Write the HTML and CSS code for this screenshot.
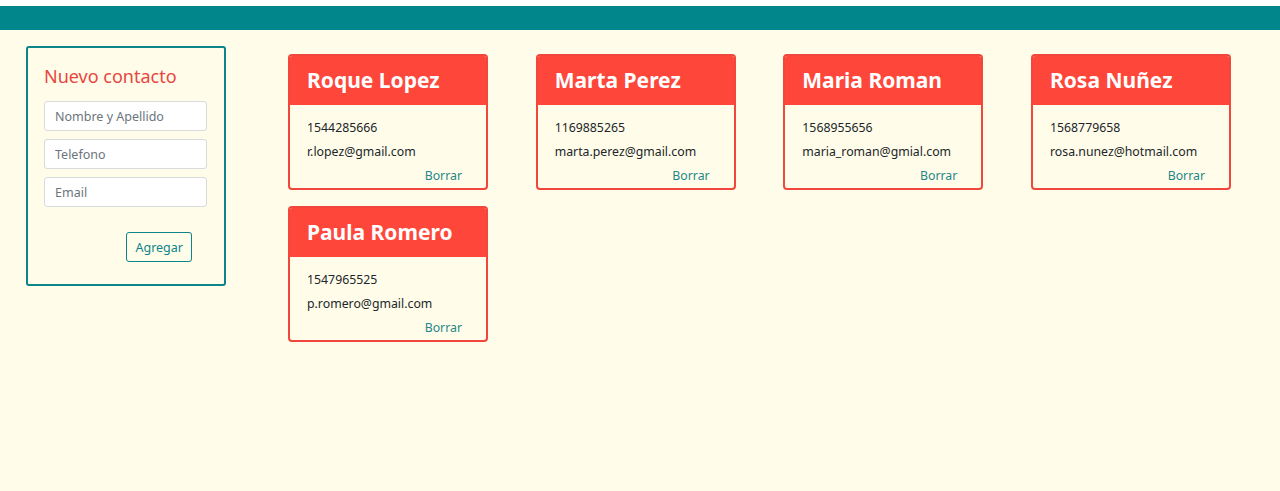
FILE: index.html
```html
<!DOCTYPE html>
<html lang="es">
<head>
<meta charset="utf-8">
<title>Contactos</title>
<link rel="stylesheet" href="styles.css">
</head>
<body>
<div class="topline"></div>
<header class="navbar"></header>
<main class="layout">
  <aside class="form-box">
    <h2 class="form-title">Nuevo contacto</h2>
    <input class="field" type="text" placeholder="Nombre y Apellido">
    <input class="field" type="text" placeholder="Telefono">
    <input class="field" type="text" placeholder="Email">
    <div class="actions"><button class="btn-add">Agregar</button></div>
  </aside>
  <section class="cards">
    <article class="card">
      <h3 class="card-head">Roque Lopez</h3>
      <div class="card-body">
        <p class="line">1544285666</p>
        <p class="line">r.lopez@gmail.com</p>
        <a class="del">Borrar</a>
      </div>
    </article>
    <article class="card">
      <h3 class="card-head">Marta Perez</h3>
      <div class="card-body">
        <p class="line">1169885265</p>
        <p class="line">marta.perez@gmail.com</p>
        <a class="del">Borrar</a>
      </div>
    </article>
    <article class="card">
      <h3 class="card-head">Maria Roman</h3>
      <div class="card-body">
        <p class="line">1568955656</p>
        <p class="line">maria_roman@gmial.com</p>
        <a class="del">Borrar</a>
      </div>
    </article>
    <article class="card">
      <h3 class="card-head">Rosa Nuñez</h3>
      <div class="card-body">
        <p class="line">1568779658</p>
        <p class="line">rosa.nunez@hotmail.com</p>
        <a class="del">Borrar</a>
      </div>
    </article>
    <article class="card">
      <h3 class="card-head">Paula Romero</h3>
      <div class="card-body">
        <p class="line">1547965525</p>
        <p class="line">p.romero@gmail.com</p>
        <a class="del">Borrar</a>
      </div>
    </article>
  </section>
</main>
</body>
</html>
```
FILE: styles.css
```css
html, body {
  margin: 0;
  padding: 0;
}
body {
  background: #fffde9;
  font-family: "Noto Sans", "Open Sans", sans-serif;
  color: #212529;
  min-height: 491px;
}
.topline {
  height: 6px;
  background: #ffffff;
}
.navbar {
  height: 24px;
  background: #00868b;
}
.layout {
  display: flex;
  align-items: flex-start;
  padding: 16px 0 0 26px;
  gap: 62px;
}
.form-box {
  width: 200px;
  box-sizing: border-box;
  border: 2px solid #0b858a;
  border-radius: 3px;
  padding: 15px 17px 22px 16px;
  display: flex;
  flex-direction: column;
  gap: 8px;
}
.form-title {
  margin: 0 0 4px;
  font-size: 18px;
  font-weight: 400;
  color: #e8463f;
  line-height: 26px;
}
.field {
  height: 30px;
  width: 100%;
  box-sizing: border-box;
  border: 1px solid #d9dadb;
  border-radius: 3px;
  background: #ffffff;
  padding: 0 10px;
  font-family: inherit;
  font-size: 12.5px;
  color: #495057;
}
.field::placeholder {
  color: #6c757d;
}
.actions {
  display: flex;
  justify-content: flex-end;
  padding: 17px 15px 0 0;
}
.btn-add {
  height: 30px;
  padding: 0 8px;
  background: transparent;
  border: 1px solid #0b858a;
  border-radius: 3px;
  color: #0b858a;
  font-family: inherit;
  font-size: 12.5px;
}
.cards {
  margin-top: 8px;
  display: grid;
  grid-template-columns: repeat(4, 200px);
  column-gap: 47.67px;
  row-gap: 16px;
}
.card {
  height: 136px;
  box-sizing: border-box;
  border: 2px solid #f2473c;
  border-radius: 4px;
  overflow: hidden;
  background: #fffde9;
  display: flex;
  flex-direction: column;
}
.card-head {
  margin: 0;
  height: 49px;
  box-sizing: border-box;
  background: #ff463a;
  color: #ffffff;
  font-size: 21px;
  font-weight: 700;
  padding: 9px 0 0 17px;
  line-height: 30px;
}
.card-body {
  padding: 11px 24px 0 17px;
  display: flex;
  flex-direction: column;
  font-size: 12.3px;
}
.line {
  margin: 0;
  line-height: 24px;
  color: #212529;
}
.del {
  align-self: flex-end;
  line-height: 24px;
  color: #1f868a;
  cursor: pointer;
}
```
